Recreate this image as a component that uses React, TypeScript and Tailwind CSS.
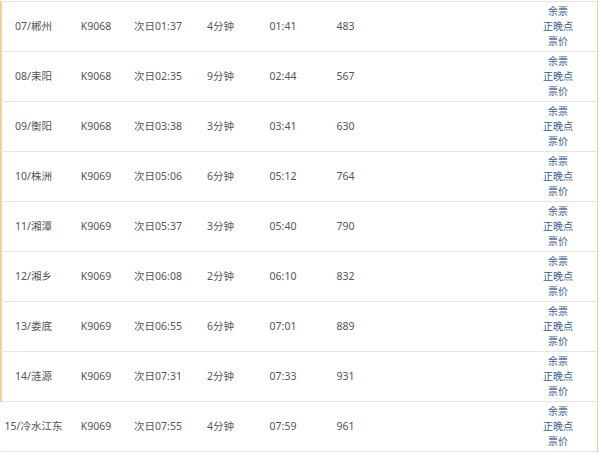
import React from "react";

type Stop = {
  station: string;
  train: string;
  arrive: string;
  stay: string;
  depart: string;
  km: string;
};

const stops: Stop[] = [
  { station: "07/郴州", train: "K9068", arrive: "次日01:37", stay: "4分钟", depart: "01:41", km: "483" },
  { station: "08/耒阳", train: "K9068", arrive: "次日02:35", stay: "9分钟", depart: "02:44", km: "567" },
  { station: "09/衡阳", train: "K9068", arrive: "次日03:38", stay: "3分钟", depart: "03:41", km: "630" },
  { station: "10/株洲", train: "K9069", arrive: "次日05:06", stay: "6分钟", depart: "05:12", km: "764" },
  { station: "11/湘潭", train: "K9069", arrive: "次日05:37", stay: "3分钟", depart: "05:40", km: "790" },
  { station: "12/湘乡", train: "K9069", arrive: "次日06:08", stay: "2分钟", depart: "06:10", km: "832" },
  { station: "13/娄底", train: "K9069", arrive: "次日06:55", stay: "6分钟", depart: "07:01", km: "889" },
  { station: "14/涟源", train: "K9069", arrive: "次日07:31", stay: "2分钟", depart: "07:33", km: "931" },
  { station: "15/冷水江东", train: "K9069", arrive: "次日07:55", stay: "4分钟", depart: "07:59", km: "961" },
];

export default function App() {
  return (
    <main
      className="w-[600px] h-[454px] overflow-hidden bg-white text-[10.5px] text-[#555]"
      style={{ fontFamily: '"Noto Sans", "Noto Sans CJK SC", sans-serif' }}
    >
      <div className="pt-px border-r border-[#f3cf94] mr-[2px]">
        {stops.map((s, i) => (
          <div
            key={s.station}
            className={
              "flex items-center h-[50px] border-b border-[#e6e6e6] " +
              (i === 0 ? "border-t border-t-[#e6e6e6] h-[51px] " : "") +
              (i < stops.length - 1 ? "border-l-2 border-l-[#f3cf94]" : "border-l-2 border-l-white")
            }
          >
            <div className="w-[63px] text-center whitespace-nowrap">{s.station}</div>
            <div className="w-[62px] text-center">{s.train}</div>
            <div className="w-[62px] text-center">{s.arrive}</div>
            <div className="w-[63px] text-center">{s.stay}</div>
            <div className="w-[62px] text-center">{s.depart}</div>
            <div className="w-[63px] text-center">{s.km}</div>
            <div className="flex-1" />
            <div className="w-[60px] mr-[9px] flex flex-col items-center text-[10px] leading-[15px] text-[#3a5d92]">
              <a href="#">余票</a>
              <a href="#">正晚点</a>
              <a href="#">票价</a>
            </div>
          </div>
        ))}
      </div>
    </main>
  );
}
